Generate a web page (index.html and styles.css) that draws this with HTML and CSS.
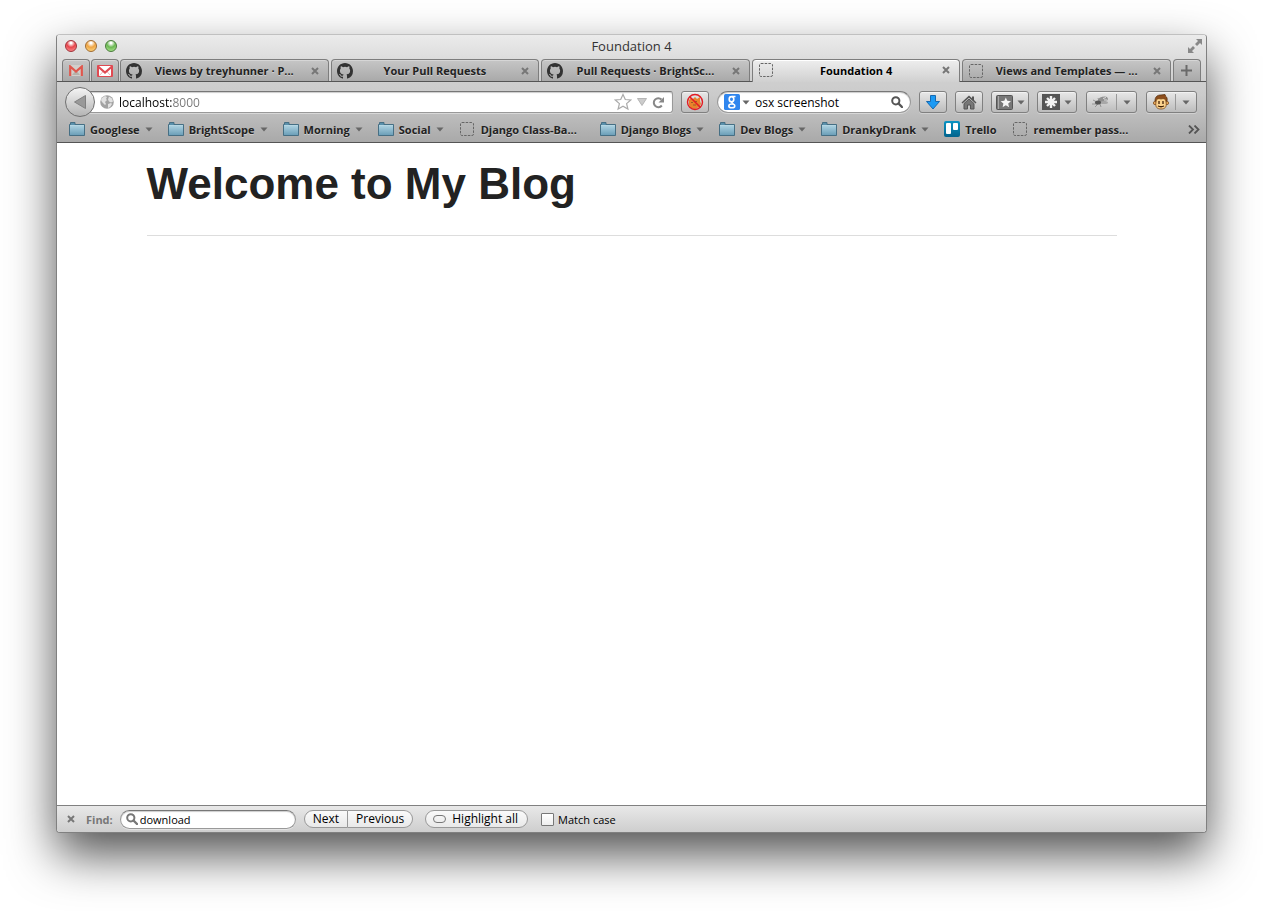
FILE: index.html
```html
<!DOCTYPE html>
<html lang="en">
<head>
<meta charset="utf-8">
<title>Foundation 4</title>
<link rel="stylesheet" href="styles.css">
</head>
<body>
<svg class="sprite" aria-hidden="true">
  <defs>
    <linearGradient id="folder-fill" x1="0" y1="0" x2="0" y2="1">
      <stop offset="0" stop-color="#a9cfdf"/><stop offset="1" stop-color="#6c9fb8"/>
    </linearGradient>
    <linearGradient id="trello-fill" x1="0" y1="0" x2="0" y2="1">
      <stop offset="0" stop-color="#0a94c4"/><stop offset="1" stop-color="#03638c"/>
    </linearGradient>
    <symbol id="folder" viewBox="0 0 16 14">
      <path d="M.5 13.500V2.500h1v-2h4.500v2h9.500v11z" fill="#5a90ab" stroke="#466f84"/>
      <path d="M1 4h14v9H1z" fill="url(#folder-fill)"/>
      <path d="M1 3.500h14" stroke="#b5d6e3"/>
    </symbol>
    <symbol id="blank" viewBox="0 0 16 16">
      <rect x="1.500" y="1.500" width="13" height="13" rx="1.500" fill="none" stroke="#666" stroke-dasharray="2.500 1.200"/>
    </symbol>
    <symbol id="github" viewBox="0 0 16 16">
      <path fill="#333" d="M8 0C3.580 0 0 3.580 0 8c0 3.540 2.290 6.530 5.470 7.590.4.070.55-.17.55-.38v-1.490c-2.010.37-2.530-.49-2.690-.94-.09-.23-.48-.94-.82-1.130-.28-.15-.68-.52-.01-.53.630-.01 1.080.58 1.230.82.720 1.210 1.870.87 2.330.66.070-.52.280-.87.510-1.070-1.780-.2-3.640-.89-3.640-3.950 0-.87.310-1.590.82-2.150-.08-.2-.36-1.020.080-2.120 0 0 .67-.21 2.200.82a7.500 7.500 0 0 1 4 0c1.530-1.040 2.200-.82 2.200-.82.440 1.100.160 1.920.080 2.120.510.56.82 1.270.82 2.150 0 3.070-1.870 3.750-3.650 3.950.290.25.540.73.540 1.480v2.200c0 .21.150.46.550.38A8 8 0 0 0 16 8c0-4.420-3.580-8-8-8z"/>
    </symbol>
    <symbol id="close" viewBox="0 0 8 8">
      <path d="M1 1l6 6M7 1L1 7" stroke="#777" stroke-width="2"/>
    </symbol>
    <symbol id="arrow" viewBox="0 0 8 5">
      <path d="M.5.500h7L4 4.500z" fill="#666"/>
    </symbol>
    <symbol id="lens" viewBox="0 0 12 12">
      <circle cx="4.800" cy="4.800" r="3.600" fill="none" stroke="currentColor" stroke-width="2"/>
      <path d="M7.500 7.500L11 11" stroke="currentColor" stroke-width="2.400" stroke-linecap="round"/>
    </symbol>
  </defs>
</svg>

<main class="window">
  <header class="chrome">
    <div class="titlebar">
      <div class="lights">
        <button class="light red" aria-label="Close window"></button>
        <button class="light amber" aria-label="Minimize"></button>
        <button class="light green" aria-label="Zoom"></button>
      </div>
      <span class="title">Foundation 4</span>
      <button class="plain fullscreen" aria-label="Full screen">
        <svg width="14" height="14" viewBox="0 0 14 14" fill="#888"><path d="M8 0h6v6l-2-2-3 3-2-2 3-3zM6 14H0V8l2 2 3-3 2 2-3 3z"/></svg>
      </button>
    </div>

    <nav class="tabs">
      <button class="tab pinned" aria-label="Gmail">
        <svg width="14" height="11" viewBox="0 0 14 11"><path d="M1 0h12v11H1z" fill="#d2cfcb"/><path d="M3 10l4-5 4 5z" fill="#b7b1a9"/><path d="M1.200 11V1.500L7 6.500l5.800-5V11" fill="none" stroke="#e0574d" stroke-width="2.200"/></svg>
      </button>
      <button class="tab pinned" aria-label="Gmail inbox">
        <svg width="16" height="12" viewBox="0 0 16 12"><rect width="16" height="12" rx="1" fill="#e04a52"/><path d="M2 1h12v10H2z" fill="#fff"/><path d="M2.500 10.500L6.500 6M13.500 10.500L9.500 6" stroke="#eab5b7"/><path d="M1 1.500l7 6 7-6" fill="none" stroke="#e04a52" stroke-width="2.200"/></svg>
      </button>
      <div class="tab">
        <svg width="16" height="16"><use href="#github"/></svg>
        <button class="plain label">Views by treyhunner · P...</button>
        <button class="plain close" aria-label="Close tab"><svg width="8" height="8"><use href="#close"/></svg></button>
      </div>
      <div class="tab">
        <svg width="16" height="16"><use href="#github"/></svg>
        <button class="plain label">Your Pull Requests</button>
        <button class="plain close" aria-label="Close tab"><svg width="8" height="8"><use href="#close"/></svg></button>
      </div>
      <div class="tab">
        <svg width="16" height="16"><use href="#github"/></svg>
        <button class="plain label">Pull Requests · BrightSc...</button>
        <button class="plain close" aria-label="Close tab"><svg width="8" height="8"><use href="#close"/></svg></button>
      </div>
      <div class="tab active">
        <svg width="16" height="16"><use href="#blank"/></svg>
        <button class="plain label">Foundation 4</button>
        <button class="plain close" aria-label="Close tab"><svg width="8" height="8"><use href="#close"/></svg></button>
      </div>
      <div class="tab">
        <svg width="16" height="16"><use href="#blank"/></svg>
        <button class="plain label">Views and Templates — ...</button>
        <button class="plain close" aria-label="Close tab"><svg width="8" height="8"><use href="#close"/></svg></button>
      </div>
      <button class="tab pinned" aria-label="New tab">
        <svg width="11" height="11" viewBox="0 0 11 11"><path d="M5.500 0v11M0 5.500h11" stroke="#6a6a6a" stroke-width="2"/></svg>
      </button>
    </nav>

    <div class="toolbar">
      <div class="location">
        <button class="back" aria-label="Back">
          <svg width="12" height="14" viewBox="0 0 12 14"><path d="M11.500.500v13L.5 7z" fill="#999" stroke="#808080"/></svg>
        </button>
        <div class="field url">
          <svg width="14" height="14" viewBox="0 0 14 14"><circle cx="7" cy="7" r="6.800" fill="#a3a3a3"/><path d="M2 3l3-2 2 1-1 2 1 1-2 2 1 2-1 1-3-3-1-2zM9 1.500l3 2 1 3-2 1-2-1-1-2zM8 9l3-1 1 1-2 3-2 1z" fill="#e2e2e2"/></svg>
          <input class="address" type="text" aria-label="Address" value="localhost:8000">
          <svg width="18" height="18" viewBox="0 0 18 18"><path d="M9 1.500l2.300 5 5.400.500-4.100 3.600 1.300 5.400L9 13.200 4.100 16l1.300-5.400L1.300 7l5.400-.5z" fill="#fff" stroke="#aaa" stroke-width="1.200"/></svg>
          <svg width="10" height="8" viewBox="0 0 10 8"><path d="M.5.500h9L5 7.500z" fill="#ccc" stroke="#b5b5b5"/></svg>
          <button class="plain" aria-label="Reload">
            <svg width="13" height="13" viewBox="0 0 13 13"><path d="M9.800 9.500A4.500 4.500 0 1 1 9.500 3.500" fill="none" stroke="#888" stroke-width="2"/><path d="M12 1v5.500H6.500z" fill="#888"/></svg>
          </button>
        </div>
      </div>
      <button class="tool" aria-label="Block content">
        <svg width="18" height="18" viewBox="0 0 18 18"><path d="M3 7l2-2 2 1 2-2 2 2 3-2v4l1 3-2 3-4 2-4-1-2-3z" fill="#e9822b"/><path d="M5 9.500h2M9 8.500h2M7 12h3" stroke="#9b5a28"/><circle cx="9" cy="9" r="7.500" fill="none" stroke="#e31b23" stroke-width="1.400"/><path d="M3.700 3.700l10.600 10.600" stroke="#e31b23" stroke-width="1.600"/></svg>
      </button>
      <div class="field search">
        <button class="plain engine" aria-label="Search engine">
          <svg width="16" height="16" viewBox="0 0 16 16"><rect width="16" height="16" rx="1.500" fill="#3086ee"/><g fill="none" stroke="#fff"><ellipse cx="7.500" cy="5.200" rx="2.300" ry="2.600" stroke-width="1.600"/><path d="M8 2.500h3.500M8.500 7.600c-2 1 0 1.600 1 2.200" stroke-width="1.300"/><ellipse cx="7.800" cy="11.900" rx="3" ry="1.900" stroke-width="1.500"/></g></svg>
          <svg width="8" height="5"><use href="#arrow"/></svg>
        </button>
        <input type="text" aria-label="Search" value="osx screenshot">
        <button class="plain" aria-label="Go"><svg class="dark" width="12" height="12"><use href="#lens"/></svg></button>
      </div>
      <button class="tool" aria-label="Downloads">
        <svg width="14" height="15" viewBox="0 0 14 15"><path d="M4.500.500h5v6h4L7 14 .5 6.500h4z" fill="#1a9af5" stroke="#1769b0"/></svg>
      </button>
      <button class="tool" aria-label="Home">
        <svg width="16" height="15" viewBox="0 0 16 15"><path d="M8 .5L.5 7.500l1 1L8 2.800l6.500 5.700 1-1L13 5V1.500h-2v1.700z" fill="#555"/><path d="M3 8.500L8 4l5 4.500V14H9.500v-4h-3v4H3z" fill="#777" stroke="#555"/></svg>
      </button>
      <button class="tool wide" aria-label="Bookmarks">
        <svg width="17" height="15" viewBox="0 0 17 15"><rect x=".5" y=".5" width="16" height="14" rx="1" fill="#777" stroke="#555"/><path d="M2.500 1v13" stroke="#aaa"/><path d="M9.800 2.500l1.500 3.300 3.700.4-2.800 2.400.9 3.600-3.300-1.900-3.200 1.900.8-3.600-2.800-2.400 3.700-.4z" fill="#f4f4f4"/></svg>
        <svg width="8" height="5"><use href="#arrow"/></svg>
      </button>
      <button class="tool wider" aria-label="Extensions">
        <svg width="18" height="16" viewBox="0 0 18 16"><path d="M0 0h18v16H0z" fill="#555"/><path d="M9 2v12M3 8h12M5 4l8 8M13 4l-8 8" stroke="#f2f2f2" stroke-width="2.400"/></svg>
        <svg width="8" height="5"><use href="#arrow"/></svg>
      </button>
      <button class="tool split" aria-label="Firebug">
        <svg width="18" height="16" viewBox="0 0 18 16"><path d="M1 6l4 2M0 10h5M3 13l3-3M9 13l-1-3M6 4l1 3" stroke="#888" stroke-width=".8"/><ellipse cx="11" cy="5.500" rx="5" ry="2.800" fill="#8f8f8f" transform="rotate(-15 11 5.500)"/><ellipse cx="12" cy="8.500" rx="4" ry="1.600" fill="#a8a8a8"/><ellipse cx="6" cy="8.500" rx="3" ry="2" fill="#555"/><path d="M11 4.500l3-1M12 6h3" stroke="#ddd"/></svg>
        <i class="divider"></i>
        <svg width="8" height="5"><use href="#arrow"/></svg>
      </button>
      <button class="tool split" aria-label="Greasemonkey">
        <svg width="16" height="16" viewBox="0 0 16 16"><path d="M2 7C2 3 4 1 8 1l4-.5.500 1.500C14 3 14.500 5 14 7z" fill="#8e4e1c" stroke="#5b3411" stroke-width=".8"/><g fill="#f0b261" stroke="#7a481b" stroke-width=".8"><circle cx="2" cy="9" r="1.600"/><circle cx="14" cy="9" r="1.600"/><path d="M3 8c0-3 2-4 5-3 3-1 5 0 5 3 1 5-1 7-5 7S2 13 3 8z" fill="#fbd28d"/></g><path d="M6 7v3M10 7v3M5 12c2 1 4 1 6 0" fill="none" stroke="#402008" stroke-width="1.300"/></svg>
        <i class="divider"></i>
        <svg width="8" height="5"><use href="#arrow"/></svg>
      </button>
    </div>

    <nav class="bookmarks">
      <button class="plain mark"><svg width="16" height="14"><use href="#folder"/></svg><span>Googlese</span><svg width="8" height="5"><use href="#arrow"/></svg></button>
      <button class="plain mark"><svg width="16" height="14"><use href="#folder"/></svg><span>BrightScope</span><svg width="8" height="5"><use href="#arrow"/></svg></button>
      <button class="plain mark"><svg width="16" height="14"><use href="#folder"/></svg><span>Morning</span><svg width="8" height="5"><use href="#arrow"/></svg></button>
      <button class="plain mark"><svg width="16" height="14"><use href="#folder"/></svg><span>Social</span><svg width="8" height="5"><use href="#arrow"/></svg></button>
      <a class="mark page" href="#"><svg width="16" height="16"><use href="#blank"/></svg><span>Django Class-Ba...</span></a>
      <button class="plain mark"><svg width="16" height="14"><use href="#folder"/></svg><span>Django Blogs</span><svg width="8" height="5"><use href="#arrow"/></svg></button>
      <button class="plain mark"><svg width="16" height="14"><use href="#folder"/></svg><span>Dev Blogs</span><svg width="8" height="5"><use href="#arrow"/></svg></button>
      <button class="plain mark"><svg width="16" height="14"><use href="#folder"/></svg><span>DrankyDrank</span><svg width="8" height="5"><use href="#arrow"/></svg></button>
      <a class="mark" href="#"><svg width="16" height="16" viewBox="0 0 16 16"><rect width="16" height="16" rx="2" fill="url(#trello-fill)"/><rect x="2" y="2" width="5" height="11" rx="1" fill="#fff"/><rect x="9" y="2" width="5" height="7" rx="1" fill="#fff"/></svg><span>Trello</span></a>
      <a class="mark page" href="#"><svg width="16" height="16"><use href="#blank"/></svg><span>remember pass...</span></a>
      <button class="plain more" aria-label="More bookmarks"><svg width="12" height="9" viewBox="0 0 12 9"><path d="M1 .5l4 4-4 4M6.500.500l4 4-4 4" fill="none" stroke="#555" stroke-width="1.800"/></svg></button>
    </nav>
  </header>

  <section class="page-view">
    <div class="row">
      <h1>Welcome to My Blog</h1>
      <hr>
    </div>
  </section>

  <footer class="findbar">
    <button class="plain" aria-label="Close find bar"><svg width="8" height="8"><use href="#close"/></svg></button>
    <label class="find-label" for="find">Find:</label>
    <div class="field find">
      <svg width="12" height="12"><use href="#lens"/></svg>
      <input id="find" type="text" value="download">
    </div>
    <div class="pair">
      <button class="pill">Next</button>
      <button class="pill">Previous</button>
    </div>
    <button class="pill highlight"><i class="ring"></i>Highlight all</button>
    <label class="match"><input type="checkbox">Match case</label>
  </footer>
</main>
</body>
</html>
```
FILE: styles.css
```css
* { box-sizing: border-box; }

body {
  margin: 0;
  min-height: 100vh;
  display: flex;
  padding: 34px 56px 78px;
  background: #fff;
  font-family: "Open Sans", "Noto Sans", sans-serif;
  color: #000;
}

svg { flex: none; display: block; }
.sprite { position: absolute; width: 0; height: 0; }

button, input { font: inherit; color: inherit; }
button { padding: 0; }

.plain { border: 0; background: none; display: flex; align-items: center; }

.window {
  flex: 1;
  min-width: 0;
  display: flex;
  flex-direction: column;
  border-radius: 4px;
  overflow: hidden;
  background: #fff;
  border: 1px solid #808080;
  border-top-color: #c0c0c0;
  box-shadow: 0 22px 48px rgba(0, 0, 0, .68);
}

/* title bar */
.chrome {
  background: linear-gradient(#ebebeb, #cfcfcf 46px, #cbcbcb 60px, #a9a9a9);
  border-bottom: 1px solid #555;
}
.titlebar {
  height: 24px;
  padding: 0 4px 2px;
  display: grid;
  grid-template-columns: 1fr auto 1fr;
  align-items: center;
}
.lights { display: flex; gap: 8px; padding-left: 4px; }
.light {
  width: 12px;
  height: 12px;
  border-radius: 50%;
  border: 1px solid #666;
}
.red { border-color: #a03038; background: radial-gradient(circle at 50% 20%, #fff 8%, #e8454c 45%, #ff9a9a); }
.amber { border-color: #a06a30; background: radial-gradient(circle at 50% 20%, #fff 8%, #efa544 45%, #ffe08a); }
.green { border-color: #487a3a; background: radial-gradient(circle at 50% 20%, #fff 8%, #6bb853 45%, #b8f09a); }
.title { font-size: 13px; line-height: 20px; color: #333; }
.fullscreen { justify-self: end; }

/* tabs */
.tabs {
  height: 23px;
  padding: 0 5px;
  display: flex;
  gap: 2px;
  border-bottom: 1px solid #555;
}
.tab {
  flex: 1;
  min-width: 0;
  display: flex;
  align-items: center;
  padding: 0 9px 0 5px;
  border: 1px solid #7d7d7d;
  border-bottom: 0;
  border-radius: 4px 4px 0 0;
  background: linear-gradient(#c6c6c6, #a9a9a9);
  box-shadow: inset 0 1px #d6d6d6;
  font-size: 11px;
  font-weight: 700;
  color: #222;
}
.tab.pinned { flex: 0 0 28px; padding: 0; justify-content: center; }
.tab.pinned + .tab { margin-left: -1px; }
.tab.active {
  background: linear-gradient(#eee, #d0d0d0);
  box-shadow: inset 0 1px #fff;
  margin-bottom: -1px;
  padding-bottom: 2px;
  color: #000;
}
.label {
  flex: 1;
  min-width: 0;
  margin-right: 4px;
  justify-content: center;
  white-space: nowrap;
  text-shadow: 0 1px rgba(255, 255, 255, .4);
}

/* navigation toolbar */
.toolbar {
  padding: 5px 9px 1px 8px;
  display: flex;
  align-items: center;
  gap: 8px;
}
.location { flex: 1; min-width: 0; display: flex; align-items: center; }
.back {
  position: relative;
  flex: none;
  width: 30px;
  height: 30px;
  border: 1px solid #707070;
  border-radius: 50%;
  background: linear-gradient(#f4f4f4, #b4b4b4);
  display: flex;
  align-items: center;
  justify-content: center;
}
.field {
  min-width: 0;
  display: flex;
  align-items: center;
  background: #fff;
  border: 1px solid #999;
  border-top-color: #777;
  box-shadow: inset 0 1px 1px #ccc, 0 1px rgba(255, 255, 255, .4);
}
.field input {
  flex: 1;
  min-width: 0;
  width: 0;
  padding: 0;
  border: 0;
  outline: 0;
  background: none;
}
.url {
  flex: 1;
  height: 22px;
  margin-left: -10px;
  padding: 0 7px 0 14px;
  gap: 5px;
  border-radius: 0 3px 3px 0;
  font-size: 12px;
}
.field .address {
  background: linear-gradient(90deg, #000 54px, #777 54px);
  background-clip: text;
  -webkit-background-clip: text;
  color: transparent;
}
.search {
  width: 194px;
  height: 22px;
  padding: 0 7px 0 6px;
  gap: 5px;
  border-radius: 11px;
  font-size: 12px;
}
.engine { gap: 2px; }
.dark { color: #555; }
.tool {
  flex: none;
  width: 28px;
  height: 22px;
  border: 1px solid #808080;
  border-radius: 3px;
  background: linear-gradient(#e8e8e8, #bcbcbc);
  box-shadow: inset 0 1px #f2f2f2, 0 1px rgba(255, 255, 255, .3);
  display: flex;
  align-items: center;
  justify-content: center;
  gap: 4px;
}
.wide { width: 38px; }
.wider { width: 40px; }
.split { width: 51px; gap: 6px; margin-left: 1px; }
.divider { width: 1px; height: 16px; background: #999; }

/* bookmarks toolbar */
.bookmarks {
  height: 24px;
  padding: 0 6px 2px 12px;
  display: flex;
  align-items: center;
  gap: 15px;
  font-size: 11px;
  font-weight: 700;
  color: #222;
}
.mark {
  flex: none;
  display: flex;
  align-items: center;
  gap: 5px;
  color: inherit;
  text-decoration: none;
  white-space: nowrap;
  text-shadow: 0 1px rgba(255, 255, 255, .4);
}
.page { min-width: 126px; gap: 6px; }
.more { margin-left: auto; }

/* page */
.page-view { flex: 1; }
.row { max-width: 1000px; margin: 0 auto; padding: 0 15px; }
h1 {
  margin: 10px 0 20px;
  font: 700 44px/62px "Liberation Sans", Arial, sans-serif;
  color: #222;
}
hr { margin: 0; border: 0; border-top: 1px solid #ddd; }

/* find bar */
.findbar {
  height: 27px;
  padding: 0 10px;
  display: flex;
  align-items: center;
  border-top: 1px solid #808080;
  background: linear-gradient(#e8e8e8, #cecece);
  font-size: 11px;
}
.find-label { margin: 0 7px 0 11px; font-weight: 700; color: #777; }
.find {
  width: 176px;
  height: 19px;
  padding: 0 5px;
  gap: 2px;
  border-radius: 10px;
  color: #000;
}
.find svg { color: #777; }
.pair { display: flex; margin: 0 12px 0 8px; }
.pill {
  height: 18px;
  padding: 0 8px;
  border: 1px solid #999;
  border-radius: 9px;
  background: linear-gradient(#fafafa, #e9e9e9);
  font-size: 12px;
  line-height: 16px;
}
.pair .pill:first-child { border-radius: 9px 0 0 9px; }
.pair .pill:last-child { border-radius: 0 9px 9px 0; border-left: 0; }
.highlight { display: flex; align-items: center; gap: 6px; padding: 0 9px 0 7px; }
.ring { width: 13px; height: 8px; border: 1px solid #777; border-radius: 4px; }
.match { display: flex; align-items: center; gap: 4px; margin-left: 13px; }
.match input {
  appearance: none;
  width: 13px;
  height: 13px;
  margin: 0;
  border: 1px solid #777;
  border-radius: 1px;
  background: linear-gradient(#fff, #eee);
}
```
